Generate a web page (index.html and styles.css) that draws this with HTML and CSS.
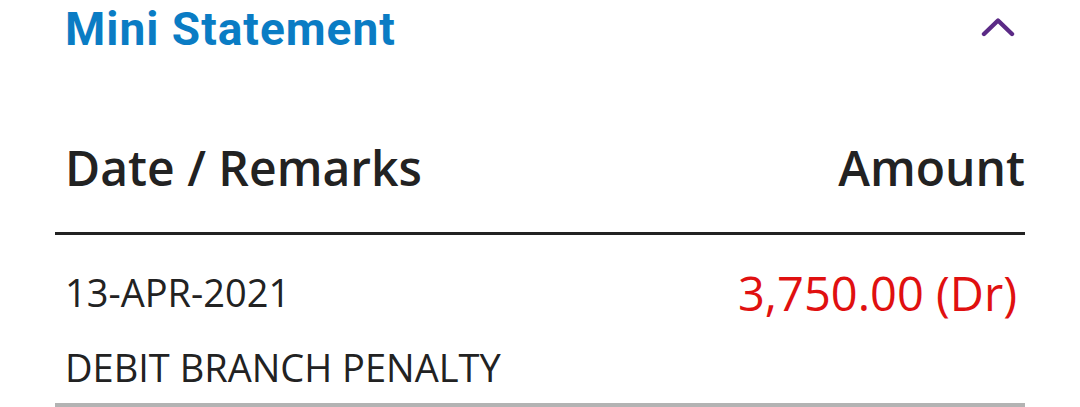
FILE: index.html
```html
<!DOCTYPE html>
<html lang="en">
<head>
<meta charset="utf-8">
<title>Mini Statement</title>
<link rel="stylesheet" href="styles.css">
</head>
<body>
<section class="panel">
  <header class="panel-head">
    <h2 class="panel-title">Mini Statement</h2>
    <button class="collapse-btn" aria-label="Collapse">
      <svg width="34" height="20" viewBox="0 0 34 20">
        <path d="M3 17 L17 3.5 L31 17" fill="none" stroke="#5b2a86" stroke-width="4.4" stroke-linecap="round" stroke-linejoin="round"/>
      </svg>
    </button>
  </header>
  <div class="table-head">
    <span class="col-left">Date / Remarks</span>
    <span class="col-right">Amount</span>
  </div>
  <div class="txn">
    <div class="txn-row">
      <span class="txn-date">13-APR-2021</span>
      <span class="txn-amount">3,750.00 (Dr)</span>
    </div>
    <div class="txn-remark">DEBIT BRANCH PENALTY</div>
  </div>
</section>
</body>
</html>
```
FILE: styles.css
```css
html, body {
  margin: 0;
  padding: 0;
  background: #ffffff;
}

.panel {
  padding: 0 55px;
  font-family: "Open Sans", "Liberation Sans", sans-serif;
}

/* Title row with the collapse chevron */
.panel-head {
  display: flex;
  justify-content: space-between;
  align-items: flex-start;
  height: 62px;
  box-sizing: border-box;
  padding: 6px 0 0 10px;
}

.panel-title {
  margin: 0;
  font-family: Roboto, "Liberation Sans", sans-serif;
  font-weight: 700;
  font-size: 46px;
  line-height: 46px;
  letter-spacing: 1px;
  color: #0a7cc4;
}

.collapse-btn {
  border: 0;
  background: none;
  padding: 0;
  margin: 11px 10px 0 0;
  display: flex;
}

/* Column headings */
.table-head {
  display: flex;
  justify-content: space-between;
  margin-top: 82px;
  padding: 0 0 40px 10px;
  border-bottom: 3px solid #222222;
  font-size: 48px;
  line-height: 48px;
  font-weight: 560;
  color: #222222;
}

/* Transaction entry */
.txn {
  padding: 35px 0 17px 10px;
  border-bottom: 4px solid #b3b3b3;
}

.txn-row {
  display: flex;
  justify-content: space-between;
  align-items: flex-start;
}

.txn-date {
  margin-top: 3px;
  font-size: 38px;
  line-height: 38px;
  color: #222222;
}

.txn-amount {
  margin-right: 8px;
  font-size: 47px;
  line-height: 47px;
  color: #e01010;
}

.txn-remark {
  margin-top: 31px;
  font-size: 38px;
  line-height: 38px;
  color: #222222;
}
```
